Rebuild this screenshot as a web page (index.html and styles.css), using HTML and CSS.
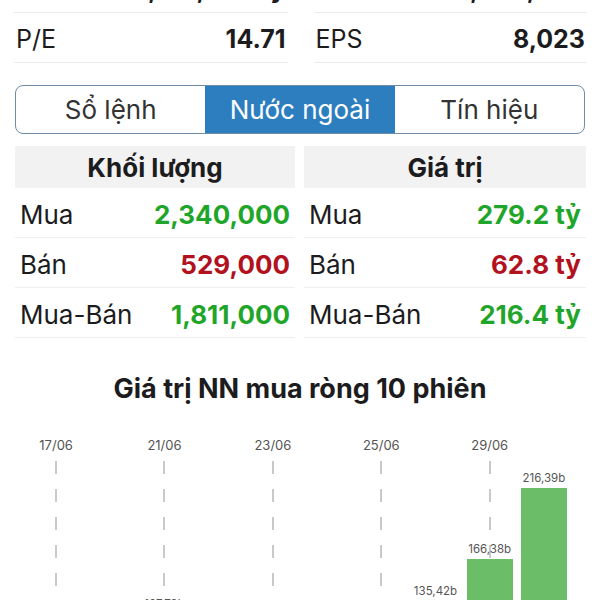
FILE: index.html
```html
<!DOCTYPE html>
<html lang="vi">
<head>
<meta charset="utf-8">
<title>Nước ngoài</title>
<link rel="stylesheet" href="styles.css">
</head>
<body>
<div class="page">
  <div class="stats">
    <div class="stat"><span class="lbl">Vốn hóa</span><span class="val">1,136,000 tỷ</span></div>
    <div class="stat"><span class="lbl">KLCP</span><span class="val">6,436,000</span></div>
    <div class="stat"><span class="lbl">P/E</span><span class="val">14.71</span></div>
    <div class="stat"><span class="lbl">EPS</span><span class="val">8,023</span></div>
  </div>

  <div class="segmented">
    <div class="seg">Sổ lệnh</div>
    <div class="seg active">Nước ngoài</div>
    <div class="seg">Tín hiệu</div>
  </div>

  <div class="tables">
    <div class="table">
      <div class="thead">Khối lượng</div>
      <div class="trow"><span>Mua</span><span class="num up">2,340,000</span></div>
      <div class="trow"><span>Bán</span><span class="num down">529,000</span></div>
      <div class="trow"><span>Mua-Bán</span><span class="num up">1,811,000</span></div>
    </div>
    <div class="table">
      <div class="thead">Giá trị</div>
      <div class="trow"><span>Mua</span><span class="num up">279.2 tỷ</span></div>
      <div class="trow"><span>Bán</span><span class="num down">62.8 tỷ</span></div>
      <div class="trow"><span>Mua-Bán</span><span class="num up">216.4 tỷ</span></div>
    </div>
  </div>

  <h2 class="title">Giá trị NN mua ròng 10 phiên</h2>

  <div class="chart">
    <div class="col"><div class="date">17/06</div><div class="plot line"><div class="blabel">98,12b</div><div class="bar" style="height:140px"></div></div></div>
    <div class="col"><div class="date"></div><div class="plot"><div class="blabel">85,40b</div><div class="bar" style="height:121px"></div></div></div>
    <div class="col"><div class="date">21/06</div><div class="plot line"><div class="blabel">107,79b</div><div class="bar" style="height:181px"></div></div></div>
    <div class="col"><div class="date"></div><div class="plot"><div class="blabel">62,15b</div><div class="bar" style="height:88px"></div></div></div>
    <div class="col"><div class="date">23/06</div><div class="plot line"><div class="blabel">74,30b</div><div class="bar" style="height:105px"></div></div></div>
    <div class="col"><div class="date"></div><div class="plot"><div class="blabel">55,08b</div><div class="bar" style="height:78px"></div></div></div>
    <div class="col"><div class="date">25/06</div><div class="plot line"><div class="blabel">90,61b</div><div class="bar" style="height:129px"></div></div></div>
    <div class="col"><div class="date"></div><div class="plot"><div class="blabel">135,42b</div><div class="bar" style="height:194px"></div></div></div>
    <div class="col"><div class="date">29/06</div><div class="plot line"><div class="blabel">166,38b</div><div class="bar" style="height:236px"></div></div></div>
    <div class="col"><div class="date"></div><div class="plot"><div class="blabel">216,39b</div><div class="bar" style="height:307px"></div></div></div>
  </div>
</div>
</body>
</html>
```

FILE: styles.css
```css
html, body {
  margin: 0;
  padding: 0;
  background: #ffffff;
  overflow: hidden;
}

body {
  font-family: Inter, "Noto Sans", sans-serif;
  color: #1c1c1e;
}

.page {
  margin-top: -37px;
}

/* top stats */
.stats {
  display: grid;
  grid-template-columns: 1fr 1fr;
  column-gap: 26px;
  padding: 0 13px 0 14px;
}

.stat {
  height: 50px;
  box-sizing: border-box;
  border-bottom: 1px solid #ececec;
  display: flex;
  align-items: center;
  justify-content: space-between;
  font-size: 25px;
  padding: 2px 2px 0 2px;
}

.stat .val {
  font-weight: 700;
}

/* segmented control */
.segmented {
  margin: 22px 15px 0 15px;
  height: 49px;
  box-sizing: border-box;
  border: 1.5px solid #6f8da7;
  border-radius: 8px;
  overflow: hidden;
  display: grid;
  grid-template-columns: 1fr 1fr 1fr;
}

.seg {
  display: flex;
  align-items: center;
  justify-content: center;
  font-size: 26px;
  color: #333333;
}

.seg.active {
  background: #2c7ebf;
  color: #ffffff;
}

/* tables */
.tables {
  margin: 12px 14px 0 15px;
  display: grid;
  grid-template-columns: 280px 1fr;
  column-gap: 9px;
}

.thead {
  height: 42px;
  background: #f2f2f2;
  display: flex;
  align-items: center;
  justify-content: center;
  font-size: 26px;
  font-weight: 700;
}

.trow {
  height: 50px;
  box-sizing: border-box;
  border-bottom: 1px solid #eeeeee;
  display: flex;
  align-items: center;
  justify-content: space-between;
  padding: 3px 5px 0 5px;
  font-size: 26px;
}

.num {
  font-weight: 700;
}

.up {
  color: #1fa62a;
}

.down {
  color: #b1121d;
}

/* title */
.title {
  margin: 35px 0 0 0;
  font-size: 27px;
  line-height: 32px;
  font-weight: 700;
  text-align: center;
}

/* chart */
.chart {
  margin: 32px 29px 0 29px;
  display: grid;
  grid-template-columns: repeat(10, 1fr);
}

.col {
  display: flex;
  flex-direction: column;
  align-items: center;
  height: 358px;
}

.date {
  height: 16px;
  line-height: 16px;
  font-size: 13px;
  color: #555555;
  white-space: nowrap;
}

.plot {
  flex: 1;
  width: 100%;
  display: flex;
  flex-direction: column;
  justify-content: flex-end;
  align-items: center;
}

.plot.line {
  background-image: repeating-linear-gradient(to bottom, transparent 0, transparent 8px, #c9c9c9 8px, #c9c9c9 21px, transparent 21px, transparent 28px);
  background-size: 2px 100%;
  background-repeat: no-repeat;
  background-position: center top;
}

.blabel {
  font-size: 11.5px;
  line-height: 14px;
  color: #555555;
  margin-bottom: 3px;
  white-space: nowrap;
}

.bar {
  width: 46px;
  background: #6cbd68;
}
```
